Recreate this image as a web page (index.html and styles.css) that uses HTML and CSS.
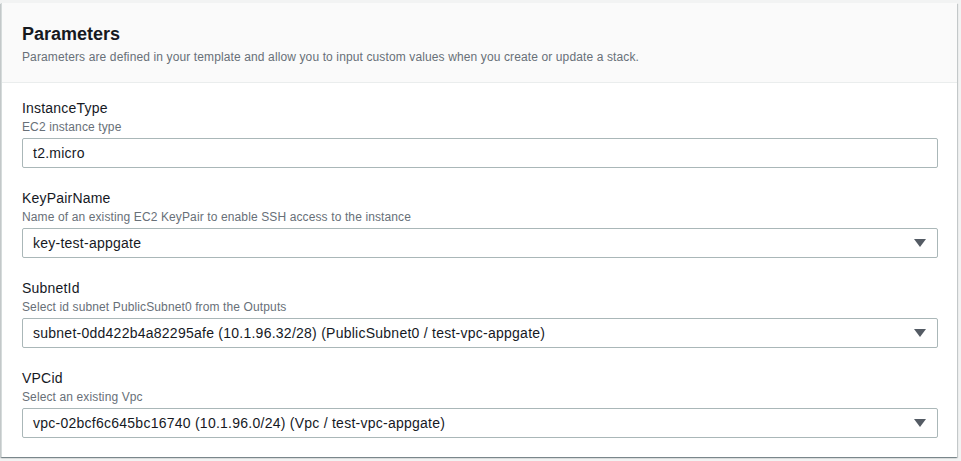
FILE: index.html
```html
<!DOCTYPE html>
<html lang="en">
<head>
<meta charset="utf-8">
<title>Parameters</title>
<link rel="stylesheet" href="styles.css">
</head>
<body>
<div class="page">
  <section class="card">
    <header class="card-header">
      <h2 class="title">Parameters</h2>
      <p class="subtitle">Parameters are defined in your template and allow you to input custom values when you create or update a stack.</p>
    </header>
    <div class="card-body">
      <div class="field">
        <div class="label">InstanceType</div>
        <div class="desc">EC2 instance type</div>
        <div class="control">t2.micro</div>
      </div>
      <div class="field">
        <div class="label">KeyPairName</div>
        <div class="desc">Name of an existing EC2 KeyPair to enable SSH access to the instance</div>
        <div class="control select"><span>key-test-appgate</span><span class="caret"></span></div>
      </div>
      <div class="field">
        <div class="label">SubnetId</div>
        <div class="desc">Select id subnet PublicSubnet0 from the Outputs</div>
        <div class="control select"><span>subnet-0dd422b4a82295afe (10.1.96.32/28) (PublicSubnet0 / test-vpc-appgate)</span><span class="caret"></span></div>
      </div>
      <div class="field">
        <div class="label">VPCid</div>
        <div class="desc">Select an existing Vpc</div>
        <div class="control select"><span>vpc-02bcf6c645bc16740 (10.1.96.0/24) (Vpc / test-vpc-appgate)</span><span class="caret"></span></div>
      </div>
    </div>
  </section>
</div>
</body>
</html>
```
FILE: styles.css
```css
html, body {
  margin: 0;
  padding: 0;
  background: #f2f3f3;
  font-family: "Liberation Sans", Arial, sans-serif;
  color: #16191f;
}
.page {
  padding: 3px 4px 3px 1px;
}
.card {
  background: #fff;
  border-left: 1px solid #d5dbdb;
  box-shadow: 0 1px 1px 0 rgba(0,28,36,.3), 1px 1px 1px 0 rgba(0,28,36,.15), -1px 1px 1px 0 rgba(0,28,36,.15);
}
.card-header {
  background: #fafafa;
  border-bottom: 1px solid #eaeded;
  padding: 20px 20px 17px 20px;
}
.title {
  margin: 0;
  font-size: 18px;
  line-height: 22px;
  font-weight: 700;
  color: #16191f;
}
.subtitle {
  margin: 4px 0 0 0;
  font-size: 12px;
  line-height: 16px;
  letter-spacing: 0.12px;
  color: #687078;
}
.card-body {
  padding: 14px 19px 19px 20px;
  display: flex;
  flex-direction: column;
  gap: 19px;
}
.label {
  font-size: 14px;
  line-height: 22px;
  letter-spacing: 0.2px;
}
.desc {
  font-size: 12px;
  line-height: 16px;
  letter-spacing: 0.12px;
  color: #687078;
  margin-bottom: 3px;
}
.control {
  height: 30px;
  box-sizing: border-box;
  border: 1px solid #aab7b8;
  border-radius: 2px;
  padding: 0 10px;
  display: flex;
  align-items: center;
  justify-content: space-between;
  font-size: 14px;
  letter-spacing: 0.25px;
}
.caret {
  width: 0;
  height: 0;
  border-left: 6px solid transparent;
  border-right: 6px solid transparent;
  border-top: 8px solid #545b64;
  margin-right: 1px;
}
```
